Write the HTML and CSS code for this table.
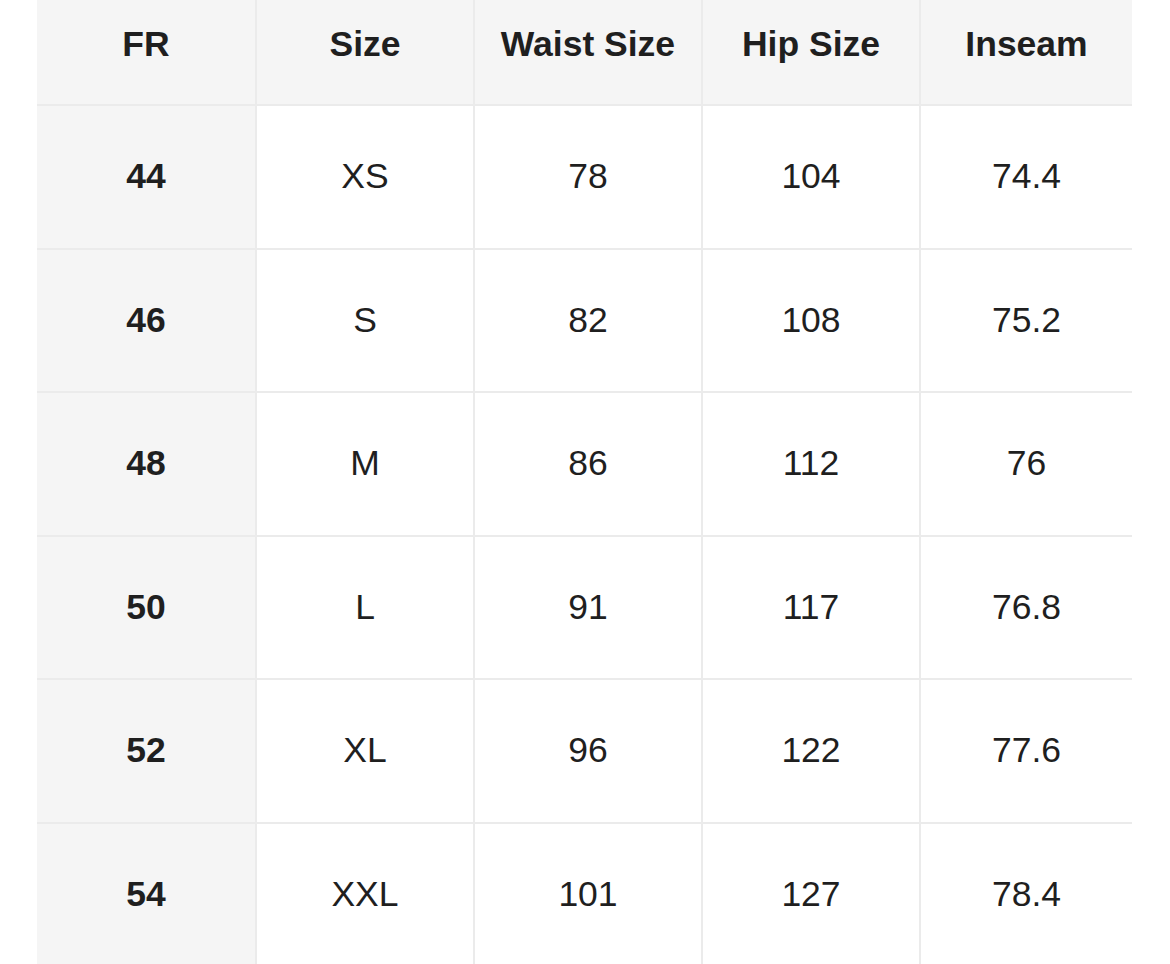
FILE: index.html
```html
<!DOCTYPE html>
<html>
<head>
<meta charset="utf-8">
<link rel="stylesheet" href="styles.css">
</head>
<body>
<table class="size-table">
  <colgroup>
    <col class="c1"><col class="c2"><col class="c3"><col class="c4"><col class="c5">
  </colgroup>
  <thead>
    <tr class="head-row">
      <th>FR</th><th>Size</th><th>Waist Size</th><th>Hip Size</th><th>Inseam</th>
    </tr>
  </thead>
  <tbody>
    <tr><th>44</th><td>XS</td><td>78</td><td>104</td><td>74.4</td></tr>
    <tr><th>46</th><td>S</td><td>82</td><td>108</td><td>75.2</td></tr>
    <tr><th>48</th><td>M</td><td>86</td><td>112</td><td>76</td></tr>
    <tr><th>50</th><td>L</td><td>91</td><td>117</td><td>76.8</td></tr>
    <tr><th>52</th><td>XL</td><td>96</td><td>122</td><td>77.6</td></tr>
    <tr><th>54</th><td>XXL</td><td>101</td><td>127</td><td>78.4</td></tr>
  </tbody>
</table>
</body>
</html>
```
FILE: styles.css
```css
html, body {
  margin: 0;
  padding: 0;
  background: #ffffff;
  overflow: hidden;
}
.size-table {
  margin: -15px 0 0 37px;
  width: 1095px;
  table-layout: fixed;
  border-collapse: collapse;
  font-family: "Liberation Sans", Arial, Helvetica, sans-serif;
  font-size: 35.5px;
  color: #1f1f1f;
}
.c1 { width: 219px; }
.c2 { width: 218px; }
.c3 { width: 228px; }
.c4 { width: 218px; }
.c5 { width: 212px; }
.size-table th,
.size-table td {
  text-align: center;
  vertical-align: middle;
  padding: 0;
  border: 2px solid #ebebeb;
  line-height: 1;
}
.size-table tr > :first-child { border-left: none; }
.size-table tr > :last-child { border-right: none; }
.size-table thead th {
  border-top: none;
  background: #f5f5f5;
  font-weight: bold;
}
.head-row { height: 120px; }
.size-table tbody tr { height: 143.5px; }
.size-table tbody th {
  background: #f5f5f5;
  font-weight: bold;
}
.size-table tbody td {
  background: #ffffff;
  font-weight: normal;
}
```
